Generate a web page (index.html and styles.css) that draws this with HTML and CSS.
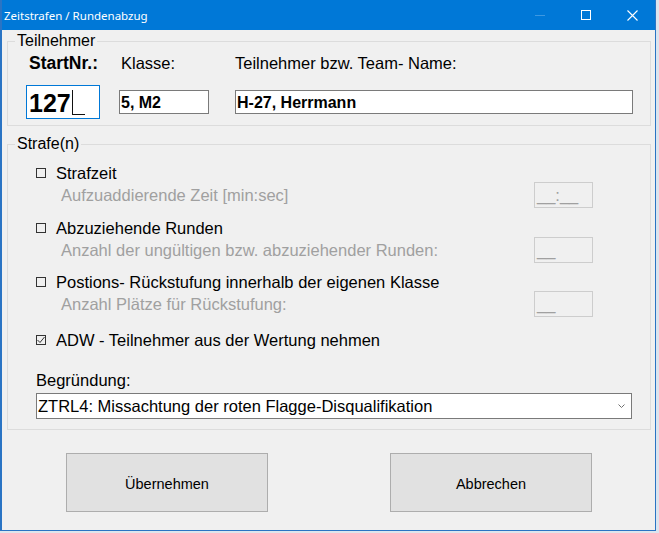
FILE: index.html
```html
<!DOCTYPE html>
<html lang="de">
<head>
    <meta charset="UTF-8">
    <title>Zeitstrafen / Rundenabzug</title>
    <link rel="stylesheet" href="styles.css">
</head>
<body>
    <div class="desktop">
        <div class="window">
            <div class="titlebar">
                <span class="title">Zeitstrafen / Rundenabzug</span>
                <div class="caption-buttons">
                    <span class="cap-btn cap-min">
                        <svg width="10" height="10" viewBox="0 0 10 10"><line x1="0" y1="5.5" x2="10" y2="5.5" stroke="currentColor" stroke-width="1"/></svg>
                    </span>
                    <span class="cap-btn">
                        <svg width="10" height="10" viewBox="0 0 10 10"><rect x="0.5" y="0.5" width="9" height="9" fill="none" stroke="currentColor" stroke-width="1"/></svg>
                    </span>
                    <span class="cap-btn">
                        <svg width="11" height="11" viewBox="0 0 11 11"><path d="M0.5 0.5 L10.5 10.5 M10.5 0.5 L0.5 10.5" stroke="currentColor" stroke-width="1.1"/></svg>
                    </span>
                </div>
            </div>

            <div class="client">
                <fieldset class="group group-participant">
                    <legend>Teilnehmer</legend>
                    <div class="participant-grid">
                        <label class="lbl lbl-start">StartNr.:</label>
                        <label class="lbl lbl-class">Klasse:</label>
                        <label class="lbl">Teilnehmer bzw. Team- Name:</label>
                        <div class="field field-start">127<span class="caret"></span></div>
                        <div class="field field-class">5, M2</div>
                        <div class="field field-name">H-27, Herrmann</div>
                    </div>
                </fieldset>

                <fieldset class="group group-penalty">
                    <legend>Strafe(n)</legend>
                    <div class="penalty-body">
                        <div class="option">
                            <div class="check-row"><span class="check"></span>Strafzeit</div>
                            <div class="sub-row">
                                <span class="sub-label">Aufzuaddierende Zeit [min:sec]</span>
                                <span class="mask-box">__:__</span>
                            </div>
                        </div>

                        <div class="option">
                            <div class="check-row"><span class="check"></span>Abzuziehende Runden</div>
                            <div class="sub-row">
                                <span class="sub-label">Anzahl der ungültigen bzw. abzuziehender Runden:</span>
                                <span class="mask-box">__</span>
                            </div>
                        </div>

                        <div class="option">
                            <div class="check-row"><span class="check"></span>Postions- Rückstufung innerhalb der eigenen Klasse</div>
                            <div class="sub-row">
                                <span class="sub-label">Anzahl Plätze für Rückstufung:</span>
                                <span class="mask-box">__</span>
                            </div>
                        </div>

                        <div class="check-row check-adw">
                            <span class="check">
                                <svg width="10" height="10" viewBox="0 0 10 10"><polyline points="1.5,5 4,7.5 8.5,2" fill="none" stroke="#333" stroke-width="1"/></svg>
                            </span>ADW - Teilnehmer aus der Wertung nehmen
                        </div>

                        <div class="reason">
                            <div class="reason-label">Begründung:</div>
                            <div class="combo">
                                <span>ZTRL4: Missachtung der roten Flagge-Disqualifikation</span>
                                <svg class="chevron" width="7" height="4" viewBox="0 0 7 4"><polyline points="0.5,0.5 3.5,3.5 6.5,0.5" fill="none" stroke="#707070" stroke-width="1"/></svg>
                            </div>
                        </div>
                    </div>
                </fieldset>

                <div class="buttons">
                    <button class="btn">Übernehmen</button>
                    <button class="btn">Abbrechen</button>
                </div>
            </div>
        </div>
        <div class="behind"></div>
    </div>
</body>
</html>
```

FILE: styles.css
```css
* {
    margin: 0;
    padding: 0;
    box-sizing: border-box;
}

body {
    width: 659px;
    height: 533px;
    overflow: hidden;
    font-family: "Liberation Sans", Arial, sans-serif;
    font-size: 16.5px;
    color: #000;
    background: #dfe5ec;
}

.desktop {
    display: flex;
    height: 533px;
}

/* Fenster */
.window {
    width: 656px;
    height: 531px;
    display: flex;
    flex-direction: column;
    background: #f0f0f0;
    border-left: 2px solid #2a74c4;
    border-right: 1px solid #2a74c4;
    border-bottom: 1px solid #2a74c4;
}

.behind {
    flex: 1;
    background: #dbe4ee;
}

.titlebar {
    height: 30px;
    flex-shrink: 0;
    display: flex;
    align-items: center;
    justify-content: space-between;
    background: #0078d7;
    color: #fff;
}

.title {
    font-family: "Noto Sans", "Open Sans", sans-serif;
    font-size: 11.5px;
    padding-left: 2px;
}

.caption-buttons {
    display: flex;
    height: 100%;
}

.cap-btn {
    width: 46px;
    height: 100%;
    display: flex;
    align-items: center;
    justify-content: center;
    color: #fff;
}

.cap-min {
    color: #3d98e2;
}

.client {
    flex: 1;
    display: flex;
    flex-direction: column;
}

/* Gruppenrahmen */
.group {
    border: 1px solid #dcdcdc;
    margin: 2px 4px 0 5px;
    padding: 0;
    min-width: 0;
}

.group legend {
    font-size: 16px;
    line-height: 18px;
    padding: 0 2px;
    margin-left: 7px;
}

.participant-grid {
    display: grid;
    grid-template-columns: 93px 116px 398px;
    grid-template-rows: 19px 46px;
    align-items: center;
    margin: 4px 0 6px 18px;
}

.lbl {
    line-height: 19px;
    white-space: nowrap;
}

.lbl-start {
    font-weight: bold;
    font-size: 17.5px;
    padding-left: 3px;
}

.lbl-class {
    padding-left: 2px;
}

.field {
    background: #fff;
    border: 1px solid #7a7a7a;
    height: 24px;
    font-weight: bold;
    font-size: 16px;
    line-height: 21px;
    padding: 1px 0 0 1px;
    white-space: nowrap;
    overflow: hidden;
}

.field-start {
    width: 74px;
    height: 34px;
    margin-top: 12px;
    border-color: #0078d7;
    font-size: 25px;
    line-height: 29px;
    padding: 3px 0 0 2px;
}

.field-class {
    width: 90px;
    margin-top: 12px;
}

.field-name {
    width: 398px;
    margin-top: 12px;
}

.caret {
    display: inline-block;
    width: 13px;
    height: 25px;
    margin-left: 1px;
    border-left: 1px solid #111;
    border-bottom: 1px solid #111;
    vertical-align: -3px;
}

.group-penalty {
    margin-top: 9px;
}

.penalty-body {
    padding: 11px 0 10px 28px;
}

.option {
    margin-bottom: 10px;
}

.option:first-child {
    margin-bottom: 11px;
}

.check-row {
    display: flex;
    align-items: center;
    height: 18px;
    line-height: 18px;
    white-space: nowrap;
}

.check {
    width: 10px;
    height: 10px;
    border: 1px solid #333;
    margin-right: 10px;
    display: flex;
    align-items: center;
    justify-content: center;
}

.check svg {
    display: block;
    margin: -1px;
}

.sub-row {
    display: flex;
    justify-content: space-between;
    align-items: center;
    width: 557px;
    height: 26px;
}

.sub-label {
    color: #a0a0a0;
    padding-left: 25px;
}

.mask-box {
    width: 59px;
    height: 26px;
    border: 1px solid #cdcdcd;
    color: #a0a0a0;
    line-height: 24px;
    padding-left: 2px;
}

.check-adw {
    margin-top: 14px;
}

.reason {
    margin-top: 22px;
}

.reason-label {
    line-height: 18px;
}

.combo {
    margin-top: 4px;
    width: 596px;
    height: 26px;
    background: #fff;
    border: 1px solid #7a7a7a;
    display: flex;
    align-items: center;
    justify-content: space-between;
    padding: 0 6px 0 1px;
}

/* Schaltflächen */
.buttons {
    display: flex;
    gap: 122px;
    padding: 23px 0 0 64px;
}

.btn {
    width: 202px;
    height: 59px;
    padding-top: 3px;
    background: #e1e1e1;
    border: 1px solid #adadad;
    font-family: "Liberation Sans", Arial, sans-serif;
    font-size: 14.5px;
    color: #000;
}
```
